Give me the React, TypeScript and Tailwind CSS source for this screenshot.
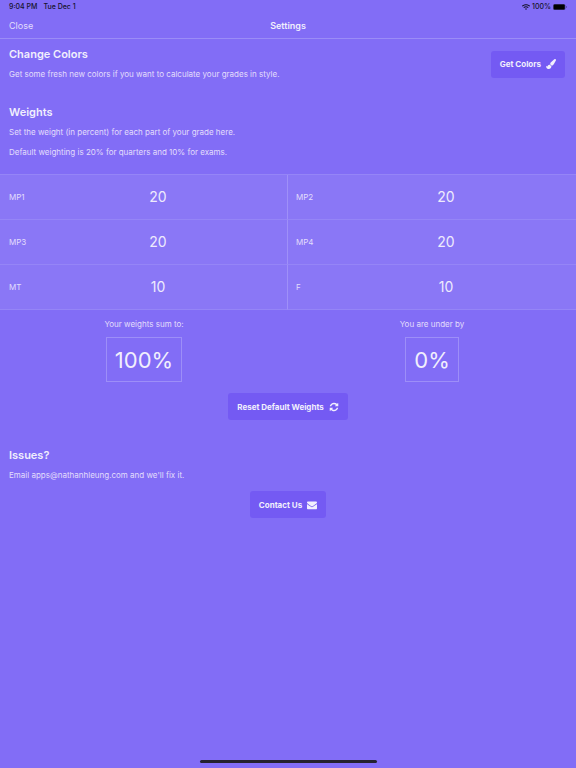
import { useState } from "react";
import type { ReactNode } from "react";
import { FaWifi } from "react-icons/fa";

const DEFAULTS = { MP1: 20, MP2: 20, MP3: 20, MP4: 20, MT: 10, F: 10 };

type Part = keyof typeof DEFAULTS;

const PARTS = Object.keys(DEFAULTS) as Part[];

const BRUSH =
  "M1615 0q70 0 122.5 46.5t52.5 116.5q0 63-45 151-332 629-465 752-97 91-218 91-126 0-216.5-92.5t-90.5-219.5q0-128 92-212l638-579q59-54 130-54zm-909 1034q39 76 106.5 130t150.5 76l1 71q4 213-129.5 347t-348.5 134q-123 0-218-46.5t-152.5-127.5-86.5-183-29-220q7 5 41 30t62 44.5 59 36.5 46 17q41 0 55-37 25-66 57.5-112.5t69.5-76 88-47.5 103-25.5 125-10.5z";
const REFRESH =
  "M1639 1056q0 5-1 7-64 268-268 434.5t-478 166.5q-146 0-282.5-55t-243.5-157l-129 129q-19 19-45 19t-45-19-19-45v-448q0-26 19-45t45-19h448q26 0 45 19t19 45-19 45l-137 137q71 66 161 102t187 36q134 0 250-65t186-179q11-17 53-117 8-23 30-23h192q13 0 22.5 9.5t9.5 22.5zm25-800v448q0 26-19 45t-45 19h-448q-26 0-45-19t-19-45 19-45l138-138q-148-137-349-137-134 0-250 65t-186 179q-11 17-53 117-8 23-30 23h-199q-13 0-22.5-9.5t-9.5-22.5v-7q65-268 270-434.5t480-166.5q146 0 284 55.5t245 156.5l130-129q19-19 45-19t45 19 19 45z";
const ENVELOPE =
  "M1792 710v794q0 66-47 113t-113 47h-1472q-66 0-113-47t-47-113v-794q44 49 101 87 362 246 497 345 57 42 92.5 65.5t94.5 48 110 24.5h2q51 0 110-24.5t94.5-48 92.5-65.5q170-123 498-345 57-39 100-87zm0-294q0 79-49 151t-122 123q-376 261-468 325-10 7-42.5 31t-54 38.5-52 32.5-57.5 27-50 9h-2q-23 0-50-9t-57.5-27-52-32.5-54-38.5-42.5-31q-91-64-262-182.5t-205-142.5q-62-42-117-115.5t-55-136.5q0-78 41.5-130t118.5-52h1472q65 0 112.5 47t47.5 113z";

function StatusBar() {
  return (
    <div className="flex h-[14px] items-center justify-between px-[9px] text-[7px] font-medium text-[#15122a]">
      <div className="flex gap-[6px]">
        <span>9:04 PM</span>
        <span>Tue Dec 1</span>
      </div>
      <div className="flex items-center gap-[2px]">
        <FaWifi className="size-2" aria-hidden />
        <span>100%</span>
        <svg className="h-[6px] w-[14px]" viewBox="0 0 14 6" aria-hidden>
          <rect width="12.4" height="6" rx="1.6" fill="#4a3f8c" />
          <rect x="0.7" y="0.6" width="11" height="4.8" rx="1" fill="#000" />
          <path d="M13 2v2c.5-.1.8-.5.8-1s-.3-.9-.8-1z" fill="#4a3f8c" />
        </svg>
      </div>
    </div>
  );
}

function ActionButton({
  icon,
  children,
  onClick,
}: {
  icon: string;
  children: ReactNode;
  onClick?: () => void;
}) {
  return (
    <button
      type="button"
      onClick={onClick}
      className="flex h-[27px] shrink-0 items-center gap-[5px] rounded-[3px] bg-[#745af3] px-[9px] text-[8px] font-bold text-[#f1effd]"
    >
      {children}
      <svg className="size-[10px]" viewBox="0 0 1792 1792" fill="currentColor" aria-hidden>
        <path d={icon} />
      </svg>
    </button>
  );
}

function Total({ label, value }: { label: string; value: number }) {
  return (
    <div className="flex flex-1 flex-col items-center gap-[6px]">
      <p>{label}</p>
      <output className="flex h-[45px] items-center border border-[#9d8ef8] px-2 text-[22px] text-[#f1effd]">
        {value}%
      </output>
    </div>
  );
}

export default function App() {
  const [weights, setWeights] = useState(DEFAULTS);
  const sum = PARTS.reduce((acc, p) => acc + weights[p], 0);

  return (
    <div className="flex min-h-screen flex-col bg-[#826df6] font-['Inter','Liberation_Sans',sans-serif] text-[8px] leading-[14px] text-[#e2ddfc]">
      <StatusBar />
      <header className="grid h-[25px] grid-cols-3 items-center border-b border-[#9b8cf7] px-[9px] text-[9px]">
        <button type="button" className="justify-self-start">
          Close
        </button>
        <h1 className="text-center font-semibold text-[#f1effd]">Settings</h1>
      </header>

      <main className="flex-1">
        <section className="flex items-center justify-between pr-[11px] pl-[9px] pt-2">
          <div>
            <h2 className="text-[11px] font-semibold text-[#f1effd]">Change Colors</h2>
            <p className="mt-[6px]">
              Get some fresh new colors if you want to calculate your grades in style.
            </p>
          </div>
          <ActionButton icon={BRUSH}>Get Colors</ActionButton>
        </section>

        <section className="mt-6">
          <div className="px-[9px]">
            <h2 className="text-[11px] font-semibold text-[#f1effd]">Weights</h2>
            <p className="mt-[6px]">Set the weight (in percent) for each part of your grade here.</p>
            <p className="mt-[6px]">Default weighting is 20% for quarters and 10% for exams.</p>
          </div>
          <div className="mt-[15px] grid grid-cols-2 border-t border-[#9585f7] bg-[#8a77f6]">
            {PARTS.map((p) => (
              <label
                key={p}
                className="flex h-[45px] items-center border-b border-[#9585f7] pl-[9px] odd:border-r odd:border-r-[#9f90f9] even:pl-2"
              >
                <span className="w-5">{p}</span>
                <input
                  inputMode="numeric"
                  value={weights[p]}
                  onChange={(e) => setWeights({ ...weights, [p]: Number(e.target.value) || 0 })}
                  className="h-full min-w-0 flex-1 pb-px text-center text-[14px] text-[#eeebfd] outline-none"
                />
              </label>
            ))}
          </div>
          <div className="mt-[7px] flex">
            <Total label="Your weights sum to:" value={sum} />
            <Total label={sum > 100 ? "You are over by" : "You are under by"} value={Math.abs(100 - sum)} />
          </div>
          <div className="mt-[11px] flex justify-center">
            <ActionButton icon={REFRESH} onClick={() => setWeights(DEFAULTS)}>
              Reset Default Weights
            </ActionButton>
          </div>
        </section>

        <section className="mt-7 px-[9px]">
          <h2 className="text-[11px] font-semibold text-[#f1effd]">Issues?</h2>
          <p className="mt-[6px]">Email apps@nathanhleung.com and we'll fix it.</p>
          <div className="mt-[9px] flex justify-center">
            <ActionButton icon={ENVELOPE}>Contact Us</ActionButton>
          </div>
        </section>
      </main>

      <div className="mx-auto mb-[5px] h-[3px] w-[177px] rounded-full bg-[#242230]" />
    </div>
  );
}
